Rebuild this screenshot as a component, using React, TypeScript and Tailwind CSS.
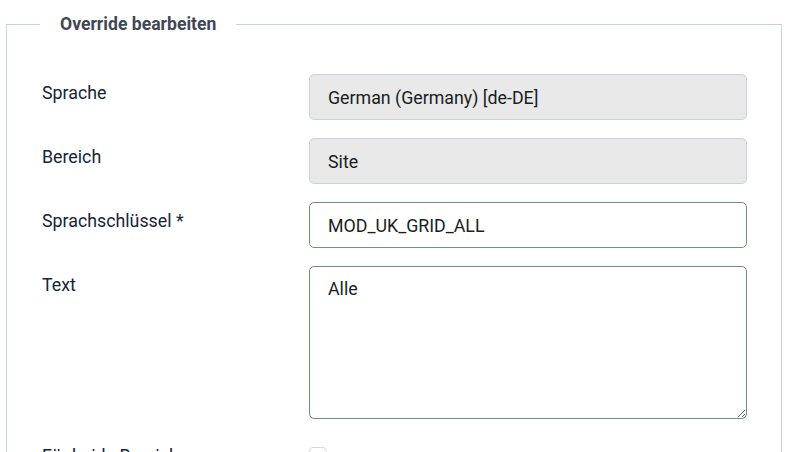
import { useState } from 'react';

const font = { fontFamily: 'Roboto, "Noto Sans", sans-serif' };

const labelCls = 'w-[267px] pt-[7px] text-[17.8px] leading-6 text-[#16243a]';
const readonlyCls =
  'w-[438px] h-[46px] rounded-[5px] border border-[#c5d3ea] bg-[#e9e9ea] px-[18px] text-[17.8px] leading-6 text-[#1a1e22] outline-none';
const validCls =
  'w-[438px] rounded-[5px] border border-[#6a9775] bg-white px-[18px] text-[17.8px] leading-6 text-[#1a1e22] outline-none';

export default function App() {
  const [text, setText] = useState('Alle');

  return (
    <div className="min-h-screen bg-white pt-3 px-[6px]" style={font}>
      <fieldset className="w-[776px] border border-[#c3d2ea] pl-[35px] pr-[34px] pt-[38px] pb-4">
        <legend className="-ml-[2px] px-5 text-[17.6px] leading-6 font-bold text-[#3f4756]">
          Override bearbeiten
        </legend>

        <div className="flex flex-col gap-[18px]">
          {/* Sprache */}
          <div className="flex">
            <label className={labelCls}>Sprache</label>
            <input readOnly value="German (Germany) [de-DE]" className={readonlyCls} />
          </div>

          {/* Bereich */}
          <div className="flex">
            <label className={labelCls}>Bereich</label>
            <input readOnly value="Site" className={readonlyCls} />
          </div>

          {/* Sprachschlüssel */}
          <div className="flex">
            <label className={labelCls}>Sprachschlüssel *</label>
            <input readOnly value="MOD_UK_GRID_ALL" className={`${validCls} h-[46px]`} />
          </div>

          {/* Text */}
          <div className="flex">
            <label className={labelCls}>Text</label>
            <textarea
              value={text}
              onChange={(e) => setText(e.target.value)}
              className={`${validCls} h-[153px] py-[10px] resize-y`}
            />
          </div>

          {/* Für beide Bereiche */}
          <div className="flex">
            <label className={labelCls}>Für beide Bereiche</label>
            <div className="pt-[10px]">
              <input type="checkbox" className="h-[18px] w-[18px] appearance-none rounded-[4px] border border-[#d5dbe3] bg-white" />
            </div>
          </div>
        </div>
      </fieldset>
    </div>
  );
}
